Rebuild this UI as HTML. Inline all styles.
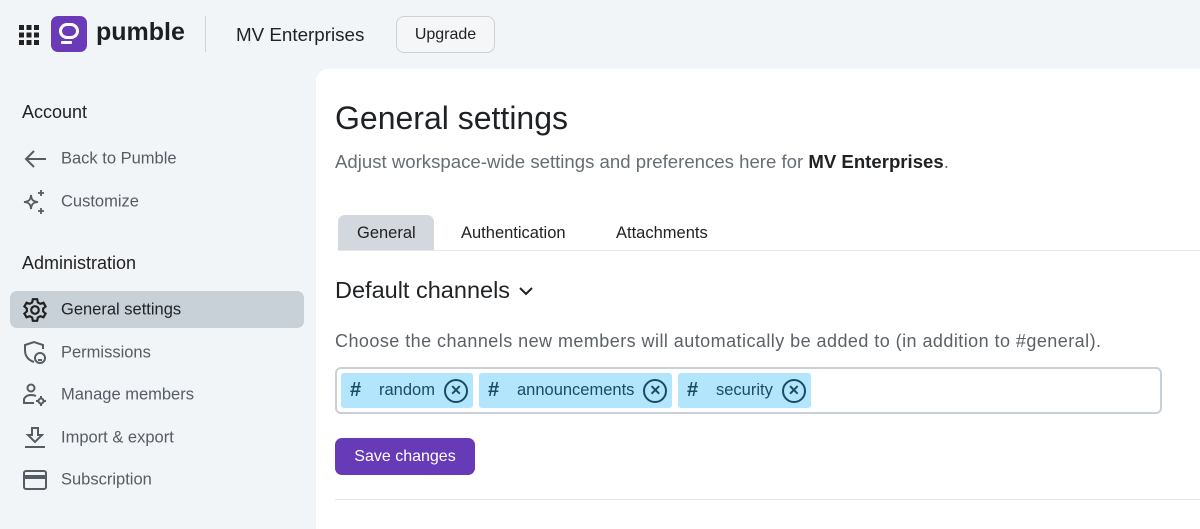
<!DOCTYPE html>
<html><head><meta charset="utf-8"><style>
*{box-sizing:border-box;margin:0;padding:0}
body{width:1200px;height:512px;overflow:hidden;background:#f2f5f8;font-family:"Liberation Sans",Arial,sans-serif;color:#1f2225;position:relative}
.abs{position:absolute}
.nav{position:absolute;left:61px;font-size:16.5px;color:#555c63;transform:translateY(-50%)}
.ic{position:absolute;left:22px;transform:translateY(-50%)}
.chip{position:absolute;top:373px;height:35px;background:#b3e5fc;border-radius:3px;color:#1d4a66;font-size:16.5px;display:flex;align-items:center}
.chip .h{font-weight:bold;font-size:20px;margin-left:9px;width:29px;color:#194a66}
.chip .x{width:24px;height:24px;border:2.5px solid #194a66;border-radius:50%;display:flex;align-items:center;justify-content:center;font-weight:bold;font-size:14px;margin-left:9px;color:#194a66}
</style></head><body>
<svg class="abs" style="left:19px;top:25px" width="20" height="20" viewBox="0 0 20 20" fill="#222">
<rect x="0" y="0" width="5" height="5"/><rect x="7.5" y="0" width="5" height="5"/><rect x="15" y="0" width="5" height="5"/>
<rect x="0" y="7.5" width="5" height="5"/><rect x="7.5" y="7.5" width="5" height="5"/><rect x="15" y="7.5" width="5" height="5"/>
<rect x="0" y="15" width="5" height="5"/><rect x="7.5" y="15" width="5" height="5"/><rect x="15" y="15" width="5" height="5"/></svg>
<svg class="abs" style="left:51px;top:16px" width="36" height="36" viewBox="0 0 36 36">
<rect width="36" height="36" rx="7" fill="#6a3ab8"/>
<rect x="9.5" y="8.5" width="17" height="13" rx="6.5" fill="none" stroke="#fff" stroke-width="3"/>
<rect x="10" y="25" width="11" height="3" rx="1" fill="#fff"/></svg>
<div class="abs" style="left:96px;top:18px;font-size:25px;font-weight:bold;color:#1d1f21;letter-spacing:0px">pumble</div>
<div class="abs" style="left:205px;top:16px;width:1px;height:36px;background:#cfd4d8"></div>
<div class="abs" style="left:236px;top:24px;font-size:18.8px;color:#222">MV Enterprises</div>
<div class="abs" style="left:396px;top:16px;width:99px;height:37px;border:1px solid #cdd2d6;border-radius:8px;background:#f4f6f8;font-size:16px;display:flex;align-items:center;justify-content:center;color:#222">Upgrade</div>
<div class="abs" style="left:22px;top:102px;font-size:18px;color:#222">Account</div>
<svg class="ic" style="top:159px" width="26" height="22" viewBox="0 0 26 22" fill="none" stroke="#555c63" stroke-width="2"><path d="M24 11H4M12 3L4 11l8 8"/></svg>
<div class="nav" style="top:159px">Back to Pumble</div>
<svg class="ic" style="top:202px" width="26" height="26" viewBox="0 0 26 26" fill="none" stroke="#555c63" stroke-width="1.8"><path d="M9 6C9.5 11 11 12.5 16 13C11 13.5 9.5 15 9 20C8.5 15 7 13.5 2 13C7 12.5 8.5 11 9 6Z"/><path d="M19 1v6M16 4h6M19 19v6M16 22h6"/></svg>
<div class="nav" style="top:202px">Customize</div>
<div class="abs" style="left:22px;top:253px;font-size:18px;color:#222">Administration</div>
<div class="abs" style="left:10px;top:291px;width:294px;height:37px;background:#c9d1d8;border-radius:7px"></div>
<svg class="ic" style="top:310px" width="26" height="26" viewBox="0 0 24 24" fill="none" stroke="#222" stroke-width="2"><circle cx="12" cy="12" r="3.5"/><path d="M10 2h4l.6 3 2.3 1.3 2.9-1 2 3.4-2.3 2v2.6l2.3 2-2 3.4-2.9-1-2.3 1.3-.6 3h-4l-.6-3-2.3-1.3-2.9 1-2-3.4 2.3-2v-2.6l-2.3-2 2-3.4 2.9 1L9.4 5z"/></svg>
<div class="nav" style="top:310px;color:#1f2225">General settings</div>
<svg class="ic" style="top:353px" width="26" height="26" viewBox="0 0 26 26" fill="none" stroke="#555c63" stroke-width="2"><path d="M12 22C6 20 3 16 3 10V5l9-3 9 3v4"/><circle cx="18" cy="18" r="5"/><path d="M16 20h4"/></svg>
<div class="nav" style="top:353px">Permissions</div>
<svg class="ic" style="top:395px" width="26" height="26" viewBox="0 0 26 26" fill="none" stroke="#555c63" stroke-width="2"><circle cx="9" cy="6" r="3.5"/><path d="M14 14c-1.5-.7-3-1-5-1-4 0-6 2-7 4v4h10"/><circle cx="19" cy="19" r="2.5"/><path d="M19 14v2M19 22v2M14 19h2M22 19h2"/></svg>
<div class="nav" style="top:395px">Manage members</div>
<svg class="ic" style="top:438px" width="26" height="26" viewBox="0 0 26 26" fill="none" stroke="#555c63" stroke-width="2"><path d="M10 3h6v7h4l-7 7-7-7h4z"/><path d="M3 22h20"/></svg>
<div class="nav" style="top:438px">Import &amp; export</div>
<svg class="ic" style="top:480px" width="26" height="22" viewBox="0 0 26 22" fill="none" stroke="#555c63" stroke-width="2"><rect x="2" y="2" width="22" height="18" rx="2"/><path d="M2 8h22" stroke-width="4"/></svg>
<div class="nav" style="top:480px">Subscription</div>
<div class="abs" style="left:316px;top:69px;width:900px;height:460px;background:#fff;border-top-left-radius:12px"></div>
<div class="abs" style="left:335px;top:100px;font-size:32px;color:#1f2225">General settings</div>
<div class="abs" style="left:335px;top:151px;font-size:18.6px;color:#666d74">Adjust workspace-wide settings and preferences here for <b style="color:#1f2225">MV Enterprises</b>.</div>
<div class="abs" style="left:338px;top:215px;width:96px;height:36px;background:#d2d8dd;border-radius:7px 7px 0 0"></div>
<div class="abs" style="left:338px;top:250px;width:862px;height:1px;background:#e3e7ea"></div>
<div class="abs" style="left:357px;top:224px;font-size:16.5px;color:#222">General</div>
<div class="abs" style="left:461px;top:224px;font-size:16.5px;color:#222">Authentication</div>
<div class="abs" style="left:616px;top:224px;font-size:16.5px;color:#222">Attachments</div>
<div class="abs" style="left:335px;top:277px;font-size:23.5px;color:#1f2225">Default channels</div>
<svg class="abs" style="left:518px;top:285px" width="16" height="12" viewBox="0 0 16 12" fill="none" stroke="#222" stroke-width="2"><path d="M2 3l6 6 6-6"/></svg>
<div class="abs" style="left:335px;top:331px;font-size:18px;letter-spacing:0.45px;color:#5b6168;white-space:nowrap">Choose the channels new members will automatically be added to (in addition to #general).</div>
<div class="abs" style="left:335px;top:367px;width:827px;height:47px;border:2px solid #c9d1d8;border-radius:6px"></div>
<div class="chip" style="left:341px;width:132px"><span class="h">#</span>random<span class="x">✕</span></div>
<div class="chip" style="left:479px;width:193px"><span class="h">#</span>announcements<span class="x">✕</span></div>
<div class="chip" style="left:678px;width:133px"><span class="h">#</span>security<span class="x">✕</span></div>
<div class="abs" style="left:335px;top:438px;width:140px;height:37px;background:#673ab7;border-radius:7px;color:#fff;font-size:16px;display:flex;align-items:center;justify-content:center">Save changes</div>
<div class="abs" style="left:335px;top:499px;width:865px;height:1px;background:#e3e7ea"></div>
</body></html>
